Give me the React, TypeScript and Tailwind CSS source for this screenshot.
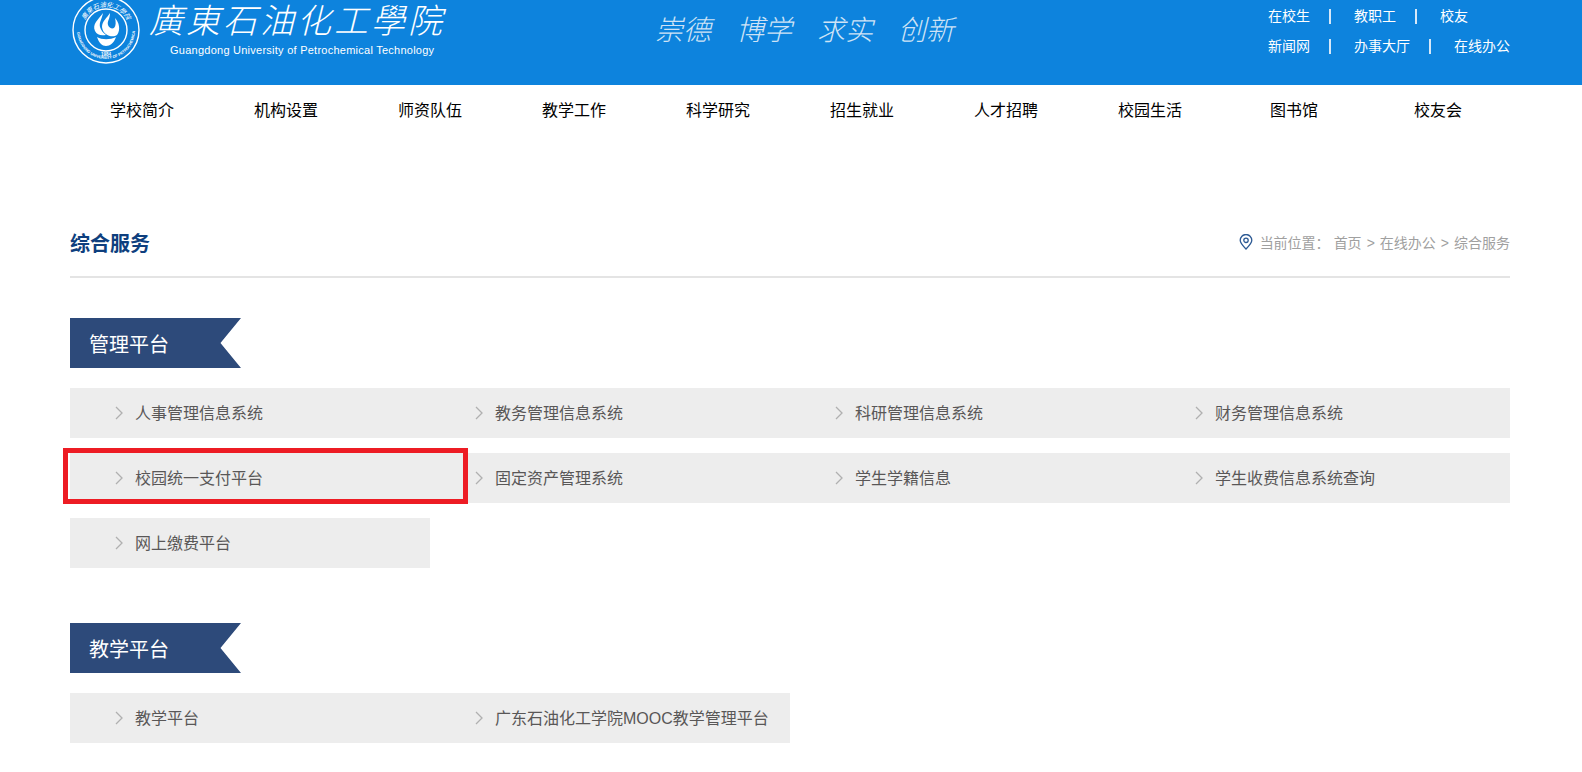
import React from 'react';

const fonts = "font-['Liberation_Sans','Noto_Sans_CJK_SC',sans-serif]";

const navItems = ['学校简介', '机构设置', '师资队伍', '教学工作', '科学研究', '招生就业', '人才招聘', '校园生活', '图书馆', '校友会'];

const manage = [
  '人事管理信息系统',
  '教务管理信息系统',
  '科研管理信息系统',
  '财务管理信息系统',
  '校园统一支付平台',
  '固定资产管理系统',
  '学生学籍信息',
  '学生收费信息系统查询',
  '网上缴费平台',
];

const teach = ['教学平台', '广东石油化工学院MOOC教学管理平台'];

const Emblem = () => (
  <svg width="70" height="66" viewBox="0 0 70 66" className="shrink-0 ml-[1px] -mt-[2px]">
    <defs>
      <path id="ringTop" d="M12 32a23 23 0 0 1 46 0" />
      <path id="ringBottom" d="M6 32a29 29 0 0 0 58 0" />
    </defs>
    <circle cx="35" cy="32" r="33" fill="none" stroke="#fff" strokeWidth="1.4" />
    <circle cx="35" cy="32" r="21" fill="none" stroke="#fff" strokeWidth="1.4" />
    <text fill="#fff" fontSize="6.500" fontFamily="'Noto Sans CJK SC',sans-serif" fontStyle="italic">
      <textPath href="#ringTop" startOffset="10">廣東石油化工學院</textPath>
    </text>
    <text fill="#fff" fontSize="3.800" fontWeight="700" fontFamily="'Liberation Sans',sans-serif">
      <textPath href="#ringBottom" startOffset="2">GUANGDONG UNIVERSITY OF PETROCHEMICAL TECHNOLOGY</textPath>
    </text>
    <path d="M24 33c-3-7 3-11 8-18-1 6-4 9-3 14 1 3 3 6 6 8-5 1-9 0-11-4z" fill="#fff" />
    <path d="M31 29c0-6 5-9 8-14 0 6-3 8-2 12 1 3 4 4 6 3 2-2 2-6 1-10 4 4 6 12 2 17-4 3-14 1-15-8z" fill="#fff" />
    <path d="M26 39c5 3 13 3 19 0-2 6-6 9-10 9s-7-3-9-9z" fill="#fff" />
    <text x="35" y="58" textAnchor="middle" fill="#fff" fontSize="4.500" fontWeight="700" fontFamily="'Liberation Sans',sans-serif">1984</text>
  </svg>
);

const Chevron = () => (
  <svg width="8" height="14" viewBox="0 0 8 14" className="shrink-0">
    <path d="M1 1l6 6-6 6" fill="none" stroke="#b0b0b0" strokeWidth="1.3" />
  </svg>
);

const TopLinks = ({ links }: { links: string[] }) => (
  <div className="flex items-center h-[30px]">
    {links.map((t, i) => (
      <React.Fragment key={t}>
        <span className="text-sm text-white">{t}</span>
        {i < links.length - 1 && <span className="w-[2px] h-[15px] bg-[#d6e8f8] ml-[19px] mr-[23px]" />}
      </React.Fragment>
    ))}
  </div>
);

const Banner = ({ title }: { title: string }) => (
  <div className="w-[171px] h-[50px] pl-[19px] pt-[3px] flex items-center bg-[#2d4a7a] text-white text-xl [clip-path:polygon(0_0,100%_0,88%_50%,100%_100%,0_100%)]">
    {title}
  </div>
);

const ServiceItem = ({ name, marked }: { name: string; marked?: boolean }) => (
  <div className="relative h-[50px] bg-[#ededed] flex items-center pl-[45px] gap-[12px] text-base text-[#595757]">
    <Chevron />
    <span className="whitespace-nowrap pt-[2px]">{name}</span>
    {marked && <div className="absolute z-10 left-[-7px] top-[-5px] w-[405px] h-[56px] border-[5px] border-[#ed1c24]" />}
  </div>
);

export default function App() {
  return (
    <div className={`h-screen overflow-hidden bg-white ${fonts}`}>
      <header className="h-[85px] bg-[#0d83dd] flex">
        <div className="w-[1440px] ml-[70px] flex justify-between">
          <div className="flex items-start">
            <Emblem />
            <div className="ml-2 w-[300px]">
              <div className="text-[34px] leading-[43px] italic font-light text-white tracking-[3px] whitespace-nowrap">廣東石油化工學院</div>
              <div className="text-[11px] leading-[14px] font-medium text-white ml-[21px] whitespace-nowrap tracking-[0.25px]">
                Guangdong University of Petrochemical Technology
              </div>
            </div>
          </div>
          <div className="flex gap-[25px] ml-[-108px] pt-[10px] text-[28px] leading-[42px] italic font-light text-[#cfe3f6] whitespace-nowrap">
            <span>崇德</span>
            <span>博学</span>
            <span>求实</span>
            <span>创新</span>
          </div>
          <div className="w-[242px] pt-[1px]">
            <TopLinks links={['在校生', '教职工', '校友']} />
            <TopLinks links={['新闻网', '办事大厅', '在线办公']} />
          </div>
        </div>
      </header>

      <main className="w-[1440px] ml-[70px]">
        <nav className="grid grid-cols-10 h-[50px] items-center pt-[2px]">
          {navItems.map((n) => (
            <div key={n} className="text-center text-base text-black">{n}</div>
          ))}
        </nav>

        <div className="mt-[83px] h-[60px] flex items-start justify-between border-b-2 border-[#e4e4e4]">
          <h1 className="text-xl leading-[52px] font-bold text-[#0e3f7e]">综合服务</h1>
          <div className="flex items-center h-[50px] text-sm text-[#a0a0a0]">
            <svg width="14" height="16" viewBox="0 0 14 16" className="mr-[7px] mb-[2px]">
              <path d="M7 15C4 12 1.200 9.300 1.200 6.300a5.800 5.800 0 0 1 11.600 0C12.800 9.300 10 12 7 15z" fill="none" stroke="#2d5a94" strokeWidth="1.300" />
              <circle cx="7" cy="6.300" r="2.200" fill="none" stroke="#2d5a94" strokeWidth="1.300" />
            </svg>
            <span>当前位置：</span>
            <span className="ml-[4px]">首页</span>
            <span className="mx-[5px]">&gt;</span>
            <span>在线办公</span>
            <span className="mx-[5px]">&gt;</span>
            <span>综合服务</span>
          </div>
        </div>

        <section className="mt-[40px]">
          <Banner title="管理平台" />
          <div className="mt-5 grid grid-cols-4 gap-y-[15px]">
            {manage.map((m, i) => (
              <ServiceItem key={m} name={m} marked={i === 4} />
            ))}
          </div>
        </section>

        <section className="mt-[55px]">
          <Banner title="教学平台" />
          <div className="mt-5 grid grid-cols-4 gap-y-[15px]">
            {teach.map((m) => (
              <ServiceItem key={m} name={m} />
            ))}
          </div>
        </section>
      </main>
    </div>
  );
}
